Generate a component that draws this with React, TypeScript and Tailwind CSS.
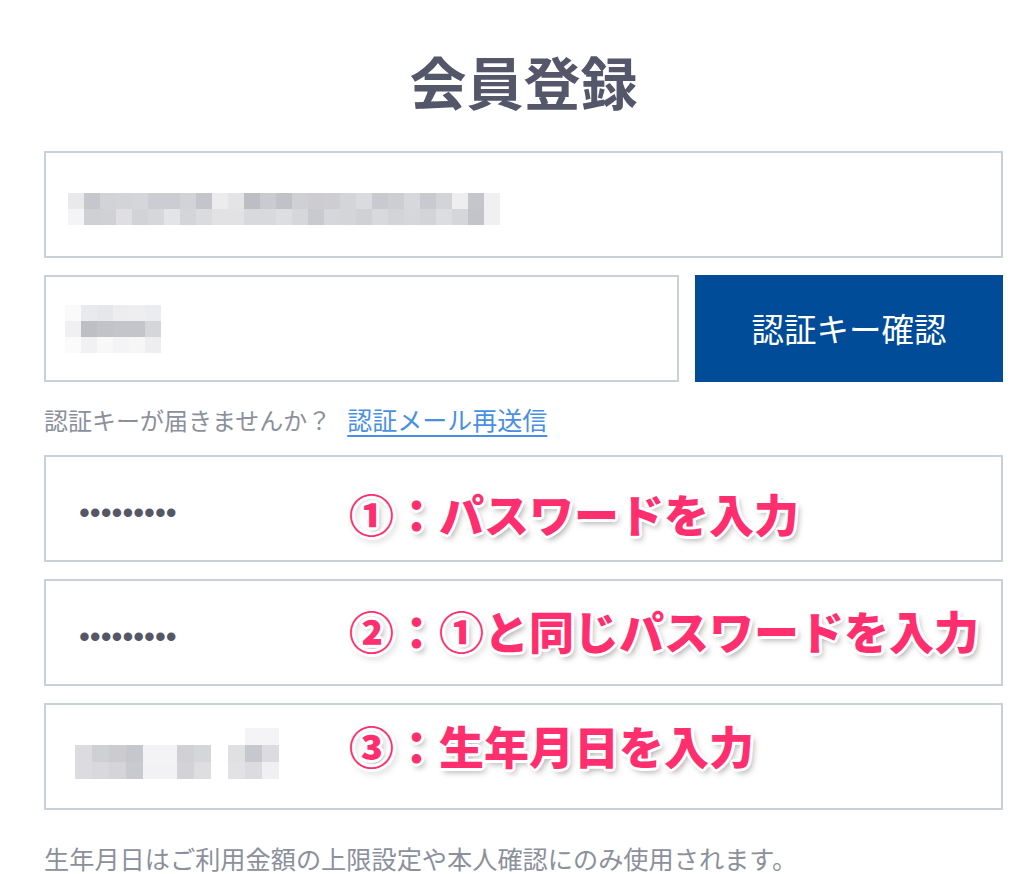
const jp = "font-['Noto_Sans_CJK_JP','Noto_Sans',sans-serif]"

const emailRows = [
  ['#e9e9ec', '#c6c7cc', '#d2d3d7', '#d3d4d8', '#d5d6da', '#cccdd2', '#cccdd2', '#d2d3d7', '#c4c5ca', '#ececef', '#e4e4e7', '#bdbec3', '#cacbd0', '#c1c2c7', '#cfd0d4', '#ccccd1', '#cdcdd2', '#d4d5d9', '#dadbdf', '#c9cacf', '#cdced2', '#d7d8dc', '#c9cacf', '#d3d4d8', '#eeeef0', '#c5c6cb', '#f0f0f2'],
  ['#f4f4f6', '#cfd0d4', '#d0d1d5', '#dfdfe3', '#d2d3d7', '#d6d7db', '#e3e4e7', '#d4d5d9', '#dadbdf', '#e2e2e5', '#e2e2e5', '#d8d9dd', '#d8d9dd', '#dddee1', '#d6d7db', '#c9cacf', '#d6d7db', '#d4d5d9', '#d0d1d5', '#d8d9dd', '#d3d4d8', '#d6d7db', '#d3d4d8', '#dcdde0', '#d5d6da', '#c3c4c9', '#f0f0f2'],
]

const keyRows = [
  ['#fafafb', '#e9eaed', '#e6e7ea', '#ededf0', '#eeeef0', '#ebecef'],
  ['#f0f0f2', '#bebfc4', '#c2c3c8', '#c4c5ca', '#c4c5ca', '#d5d6da'],
  ['#fbfbfc', '#f1f1f3', '#f8f8f9', '#f4f4f6', '#f6f6f7', '#eeeef1'],
]

const birthRows = [
  ['#ffffff', '#ffffff', '#ffffff', '#ffffff', '#ffffff', '#ffffff', '#ffffff', '#ffffff', '#ffffff', '#ffffff', '#f4f4f6', '#f4f4f6'],
  ['#dcdce0', '#cfd0d4', '#cbcbd0', '#c6c7cc', '#f3f3f5', '#f3f3f5', '#d0d0d5', '#d5d6da', '#ffffff', '#e0e0e3', '#c7c8cd', '#dcdce0'],
  ['#dcdce0', '#d9d9dd', '#d5d5d9', '#c9cacf', '#f2f2f4', '#f2f2f4', '#d3d3d7', '#dedee1', '#ffffff', '#e2e2e5', '#dcdce0', '#f0f0f2'],
]

function Mosaic({ rows, cell }: { rows: string[][]; cell: number }) {
  return (
    <div className="flex flex-col">
      {rows.map((row, i) => (
        <div key={i} className="flex">
          {row.map((c, j) => (
            <div key={j} style={{ backgroundColor: c, width: cell, height: cell }} />
          ))}
        </div>
      ))}
    </div>
  )
}

function Note({ text, top }: { text: string; top: number }) {
  return (
    <div
      className={`absolute left-[303px] ${jp} text-[45px] leading-none font-black text-[#ff2e6f] whitespace-nowrap [text-shadow:3px_0_0_#fff,-3px_0_0_#fff,0_3px_0_#fff,0_-3px_0_#fff,2px_2px_0_#fff,-2px_-2px_0_#fff,2px_-2px_0_#fff,-2px_2px_0_#fff,3px_4px_6px_rgba(0,0,0,0.35)]`}
      style={{ top }}
    >
      {text}
    </div>
  )
}

function Field({ children, className = '' }: { children?: React.ReactNode; className?: string }) {
  return (
    <div className={`relative h-[107px] border-2 border-[#c8d0da] bg-white ${className}`}>{children}</div>
  )
}

function Dots() {
  return (
    <div className="flex h-full items-center pl-[33px] pt-[8px] font-['Liberation_Sans',sans-serif] text-[31px] leading-none text-[#545766]">
      •••••••••
    </div>
  )
}

export default function App() {
  return (
    <div className={`min-h-[874px] bg-white pl-[44px] pr-[33px] ${jp}`}>
      <h1 className="pt-[52px] pb-[42px] text-center text-[57px] leading-none font-bold text-[#545669]">会員登録</h1>

      <Field>
        <div className="pl-[22px] pt-[40px]">
          <Mosaic rows={emailRows} cell={16} />
        </div>
      </Field>

      <div className="mt-[17px] flex gap-[16px]">
        <Field className="flex-1">
          <div className="pl-[19px] pt-[28px]">
            <Mosaic rows={keyRows} cell={16} />
          </div>
        </Field>
        <button className="h-[107px] w-[308px] bg-[#004c98] text-[32.5px] text-white">認証キー確認</button>
      </div>

      <div className="flex h-[73px] items-center pt-[3px] text-[24px] text-[#8c909c]">
        <span>認証キーが届きませんか？</span>
        <a className="ml-[16px] text-[25px] text-[#4a90e2] underline underline-offset-[5px]">認証メール再送信</a>
      </div>

      <div className="flex flex-col gap-[17px]">
        <Field>
          <Dots />
          <Note text="①：パスワードを入力" top={34} />
        </Field>
        <Field>
          <Dots />
          <Note text="②：①と同じパスワードを入力" top={27} />
        </Field>
        <Field>
          <div className="pl-[29px] pt-[23px]">
            <Mosaic rows={birthRows} cell={17} />
          </div>
          <Note text="③：生年月日を入力" top={18} />
        </Field>
      </div>

      <p className="pt-[36px] text-[25.2px] leading-none text-[#8c909c] whitespace-nowrap">
        生年月日はご利用金額の上限設定や本人確認にのみ使用されます。
      </p>
    </div>
  )
}
